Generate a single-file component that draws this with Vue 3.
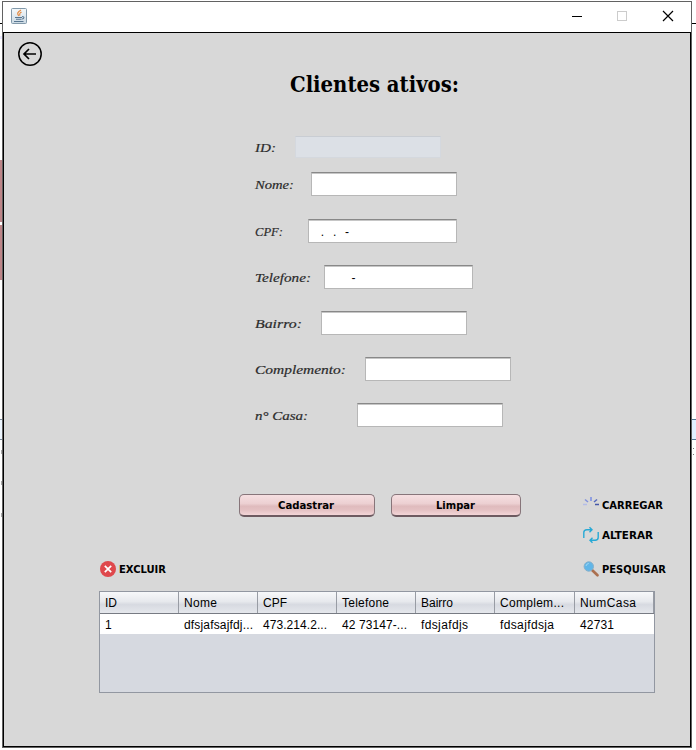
<script setup>
const fields = [
  { key: 'id', label: 'ID:', textWidth: 21, labelWidth: 41, fieldWidth: 146, value: '' },
  { key: 'nome', label: 'Nome:', textWidth: 39, labelWidth: 57, fieldWidth: 146, value: '' },
  { key: 'cpf', label: 'CPF:', textWidth: 28, labelWidth: 54, fieldWidth: 149, value: '   .   .   -' },
  { key: 'telefone', label: 'Telefone:', textWidth: 56, labelWidth: 70, fieldWidth: 149, value: '        -' },
  { key: 'bairro', label: 'Bairro:', textWidth: 47, labelWidth: 67, fieldWidth: 146, value: '' },
  { key: 'complemento', label: 'Complemento:', textWidth: 91, labelWidth: 111, fieldWidth: 146, value: '' },
  { key: 'casa', label: 'n° Casa:', textWidth: 53, labelWidth: 103, fieldWidth: 146, value: '' },
]
const columns = [
  { text: 'ID', w: 12 }, { text: 'Nome', w: 33 }, { text: 'CPF', w: 24 }, { text: 'Telefone', w: 47 },
  { text: 'Bairro', w: 32 }, { text: 'Complem...', w: 64 }, { text: 'NumCasa', w: 56 },
]
const cells = [
  { text: '1', w: 6 }, { text: 'dfsjafsajfdj...', w: 69 }, { text: '473.214.2...', w: 64 }, { text: '42 73147-...', w: 65 },
  { text: 'fdsjafdjs', w: 47 }, { text: 'fdsajfdsja', w: 54 }, { text: '42731', w: 34 },
]
</script>

<template>
  <div class="desktop">
    <div class="strip left">
      <i class="rule"></i><i class="tint"></i><i class="rose"></i><i class="notch"></i><i class="rose second"></i>
      <i class="selection"></i><i class="tick"></i><i class="tick second"></i><i class="tick third"></i>
    </div>
    <main class="window">
      <header class="titlebar">
        <svg class="java" width="16" height="16" viewBox="0 0 16 16">
          <defs>
            <linearGradient id="tile" x1="0" y1="0" x2="0" y2="1">
              <stop offset="0" stop-color="#f5f9fb" /><stop offset="1" stop-color="#cbd9e3" />
            </linearGradient>
          </defs>
          <rect x=".5" y=".5" width="15" height="15" rx="1" fill="url(#tile)" stroke="#8299aa" />
          <path d="M10 2C6 4.500 6 5.500 8 8M10.500 4C8 5.500 8.500 6 9 7.500M6.500 5.500l1 2" fill="none" stroke="#e58a42" stroke-width="1.200" />
          <path d="M4 9.500h7M5 11.300h5.500M3 13.500h9.500M11 8.500c3 0 2 2.500 0 2.500" fill="none" stroke="#587690" stroke-width="1.100" />
        </svg>
        <svg class="controls" width="104" height="14" viewBox="0 0 104 14">
          <path d="M0 7.500h10" stroke="#000" />
          <rect x="45.500" y="2.500" width="9" height="9" fill="none" stroke="#ccc" />
          <path d="M91 2l10 10M101 2L91 12" stroke="#000" stroke-width="1.200" />
        </svg>
      </header>
      <section class="content">
        <div class="heading">
          <svg class="back" width="26" height="26" viewBox="0 0 26 26" fill="none" stroke="#000">
            <circle cx="13" cy="13" r="11.200" stroke-width="1.500" />
            <path d="M19 13H7.500M12 8l-5 5 5 5" stroke-width="1.700" />
          </svg>
          <svg class="title" width="170" height="30"><text x="0" y="22" textLength="169" lengthAdjust="spacingAndGlyphs">Clientes ativos:</text></svg>
        </div>

        <form class="form">
          <div v-for="f in fields" :key="f.key" class="row" :class="f.key">
            <svg class="label" :style="{ width: f.labelWidth + 'px' }" height="24">
              <text x="1" :y="f.key === 'id' ? 16 : 17" :textLength="f.textWidth" lengthAdjust="spacingAndGlyphs">{{ f.label }}</text>
            </svg>
            <div class="field" :style="{ width: f.fieldWidth + 'px' }">{{ f.value }}</div>
          </div>
        </form>

        <div class="commands">
          <div class="push wide"><svg width="57" height="16"><text x="0" y="12" textLength="56" lengthAdjust="spacingAndGlyphs">Cadastrar</text></svg></div>
          <div class="push"><svg width="40" height="16"><text x="0" y="12" textLength="39" lengthAdjust="spacingAndGlyphs">Limpar</text></svg></div>
          <div class="action load">
            <svg width="16" height="16" viewBox="0 0 16 16" fill="none" stroke-width="1.500">
              <path d="M0 7.500h4" stroke="#b4bde9" /><path d="M2 2.500l3 2.500" stroke="#8292dc" />
              <path d="M8 0v4" stroke="#788ce3" /><path d="M14 2.500L11 5" stroke="#5368bd" /><path d="M12 7.500h4" stroke="#4558a8" />
              <path d="M3 13l2-2M8 12v2M11 11l2 2" stroke="#d2daea" stroke-width=".7" />
            </svg>
            <svg width="62" height="16"><text x="0" y="12" textLength="61" lengthAdjust="spacingAndGlyphs">CARREGAR</text></svg>
          </div>
        </div>
        <div class="action edit">
          <svg width="16" height="16" viewBox="0 0 16 16" fill="none" stroke="#27a9d5" stroke-width="1.400">
            <path d="M.800 11V5.500q0-2.700 3-2.700H9M6.500.300L9 2.800 6.500 5.300M15.200 5v5.500q0 2.700-3 2.700H7M9.500 10.700L7 13.200l2.500 2.500" />
          </svg>
          <svg width="52" height="16"><text x="0" y="12" textLength="51" lengthAdjust="spacingAndGlyphs">ALTERAR</text></svg>
        </div>
        <div class="lower">
          <div class="action remove">
            <svg width="16" height="16" viewBox="0 0 16 16"><circle cx="8" cy="8" r="8" fill="#df484c" /><path d="M4.800 4.800l6.400 6.400M11.200 4.800l-6.400 6.400" stroke="#fff" stroke-width="1.700" /></svg>
            <svg width="48" height="16"><text x="0" y="12" textLength="47" lengthAdjust="spacingAndGlyphs">EXCLUIR</text></svg>
          </div>
          <div class="action search">
            <svg width="16" height="16" viewBox="0 0 16 16">
              <path d="M9 9l5.500 5.300" stroke="#ab7050" stroke-width="2.700" stroke-linecap="round" />
              <circle cx="5.800" cy="5.500" r="4.700" fill="#61b6e8" stroke="#86b0cb" />
              <path d="M3 5q.3-2.300 2.800-2.500" fill="none" stroke="#a2d8f2" />
            </svg>
            <svg width="65" height="16"><text x="0" y="12" textLength="64" lengthAdjust="spacingAndGlyphs">PESQUISAR</text></svg>
          </div>
        </div>
        <div class="table">
          <div class="tr head">
            <div v-for="c in columns" :key="c.text" class="cell"><svg width="73" height="20"><text x="0" y="15" :textLength="c.w">{{ c.text }}</text></svg></div>
          </div>
          <div class="tr body">
            <div v-for="c in cells" :key="c.text" class="cell"><svg width="73" height="20"><text x="0" y="15" :textLength="c.w">{{ c.text }}</text></svg></div>
          </div>
        </div>
      </section>
    </main>
    <div class="strip right"><i class="rule"></i><i class="selection"></i><i class="dots"></i><i class="dots second"></i></div>
  </div>
</template>

<style>
body { margin: 0; background: #fff; overflow: hidden; }
</style>
<style scoped>
* { box-sizing: border-box; }
svg { display: block; flex: none; overflow: visible; }
.desktop { display: flex; width: 696px; height: 750px; background: #fff; }
.strip { display: flex; flex-direction: column; flex: none; }
.strip i { display: block; flex: none; }
.left { width: 2px; }
.right { width: 4px; }
.rule { height: 1px; margin-top: 23px; background: #000; }
.tint { height: 3px; margin-top: 12px; background: #e9e8ff; }
.rose { height: 62px; margin-top: 121px; background: #bd8588; }
.notch { height: 3px; background: #fff; }
.rose.second { height: 55px; margin-top: 0; }
.selection { height: 21px; border-top: 1px solid #77899a; border-bottom: 1px solid #77899a; background: #edf6ff; }
.left .selection { margin-top: 139px; }
.tick { width: 1px; height: 4px; margin: 10px 0 0 1px; background: #aaa; }
.tick.second { margin-top: 27px; }
.tick.third { margin-top: 28px; }
.right .selection { margin-top: 395px; border-color: #527794; background: #e1efff; }
.dots { height: 1px; margin: 8px 0 0 1px; background: repeating-linear-gradient(90deg, #777 0 1px, #fff 1px 3px); }
.dots.second { margin-top: 5px; }
.window { display: flex; flex-direction: column; width: 690px; height: 747px; margin-top: 1px; border: 1px solid #626262; background: #fff; flex: none; }
.titlebar { display: flex; justify-content: space-between; height: 30px; padding: 6px 15px 0 8px; }
.controls { margin-top: 1px; }
.content { height: 715px; border: 1px solid #000; background: #d8d8d8; }
.heading { display: flex; height: 103px; padding: 8px 0 0 13px; }
.title { margin: 29px 0 0 247px; }
.title text { font: bold 22px "DejaVu Serif Condensed", "DejaVu Serif", serif; font-stretch: condensed; }
.form { display: flex; flex-direction: column; padding-left: 250px; }
.row { display: flex; height: 24px; margin-bottom: 22px; }
.id { height: 22px; margin-bottom: 14px; }
.nome { margin-bottom: 23px; }
.casa { margin-bottom: 0; }
.label text { font: italic 13px "URW Chancery L", "Lucida Handwriting", "Liberation Serif", cursive; fill: #2b2b2b; stroke: #2b2b2b; stroke-width: .2px; }
.field { border: 1px solid #b7b7b7; border-top: 1px solid #888; background: #fff; box-shadow: inset 0 1px #c6c6c6; padding: 5px 3px 0 3px; font: 12px/14px "Liberation Sans", sans-serif; word-spacing: -.4px; white-space: pre; color: #000; }
.id .field { background: #dce0e6; border-color: #d4d8de; border-top-color: #c9cdd3; box-shadow: none; }
.commands { display: flex; height: 34px; margin-top: 67px; padding-left: 235px; }
.push { display: flex; justify-content: center; width: 130px; height: 23px; padding-top: 2px; border: 1px solid #87757a; border-bottom: 2px solid #6d5a60; border-radius: 5px; background: linear-gradient(#f6dfe1 0, #ecd0d2 43%, #dfbbbd 56%, #e4c1c3 75%, #f3d5d7 100%); }
.push.wide { width: 136px; margin-right: 16px; }
.push.wide svg { margin-left: -2px; }
.push text, .action text { font: bold 11px "DejaVu Sans Condensed", "DejaVu Sans", sans-serif; font-stretch: condensed; fill: #000; }
.action { display: flex; gap: 3px; height: 16px; }
.load { margin: 3px 0 0 62px; }
.edit { margin: -1px 0 0 579px; }
.lower { display: flex; height: 30px; padding: 0 0 0 96px; margin-top: 18px; }
.search { margin-left: 416px; }
.table { width: 556px; height: 102px; margin-left: 95px; border: 1px solid #9297a1; background: #d6d9e0; }
.tr { display: grid; grid-template-columns: repeat(5, 79px) 80px 79px; }
.head { height: 22px; border-bottom: 1px solid #777b83; background: linear-gradient(#f7f8fa, #e7e9ed 45%, #d7dae1 60%, #e5e7ec); }
.body { height: 20px; background: #fff; }
.cell { padding-left: 5px; overflow: hidden; }
.head .cell { border-right: 1px solid #989ca4; }
.cell text { font: 12px "Liberation Sans", sans-serif; fill: #000; }
</style>
